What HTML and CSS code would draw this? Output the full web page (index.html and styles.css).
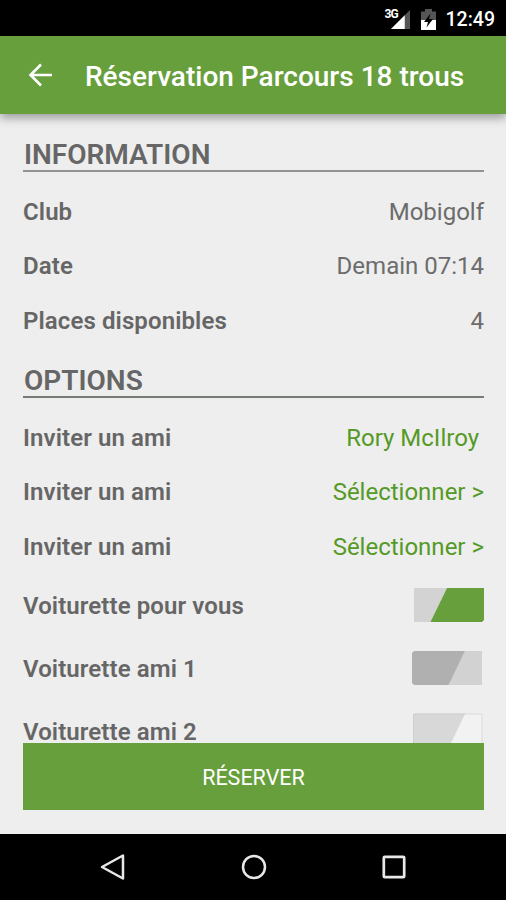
FILE: index.html
```html
<!DOCTYPE html>
<html lang="fr">
<head>
    <meta charset="UTF-8">
    <meta name="viewport" content="width=device-width, initial-scale=1.0">
    <title>Réservation Parcours 18 trous</title>
    <link rel="stylesheet" href="styles.css">
</head>
<body>
    <div class="status-bar">
        <div class="network">
            <span class="network-type">3G</span>
            <svg width="19" height="19" viewBox="0 0 20 20">
                <path d="M0 20L20 0V20Z" fill="#555"/>
                <path d="M0 20L14.500 5.500V20Z" fill="#fff"/>
            </svg>
        </div>
        <svg class="battery" width="15" height="21" viewBox="0 0 15 21">
            <path d="M0 2.500H4V0H11V2.500H15V12H0Z" fill="#555"/>
            <path d="M0 11H15V21H0Z" fill="#fff"/>
            <path d="M9.500 4.500L3 13H7L5.500 18.500L12 10H8Z" fill="#000"/>
        </svg>
        <span class="clock">12:49</span>
    </div>

    <header class="toolbar">
        <svg class="back" width="24" height="24" viewBox="0 0 24 24">
            <path d="M13 1.500L2.500 12L13 22.500M2.500 12H24" fill="none" stroke="#fff" stroke-width="2.600"/>
        </svg>
        <h1>Réservation Parcours 18 trous</h1>
    </header>

    <main class="content">
        <section>
            <h2 class="first">INFORMATION</h2>
            <div class="row"><span class="label">Club</span><span class="value">Mobigolf</span></div>
            <div class="row"><span class="label">Date</span><span class="value">Demain 07:14</span></div>
            <div class="row"><span class="label">Places disponibles</span><span class="value">4</span></div>
        </section>

        <section>
            <h2>OPTIONS</h2>
            <div class="row"><span class="label">Inviter un ami</span><a class="value link name">Rory McIlroy</a></div>
            <div class="row"><span class="label">Inviter un ami</span><a class="value link">Sélectionner &gt;</a></div>
            <div class="row"><span class="label">Inviter un ami</span><a class="value link">Sélectionner &gt;</a></div>
            <div class="row switch-row">
                <span class="label">Voiturette pour vous</span>
                <svg class="switch" width="72" height="38" viewBox="0 0 72 38">
                    <path d="M2 2H35L19 36H2Z" fill="#d3d3d3"/>
                    <path d="M35 2H72V34L70 36H18.500Z" fill="#689f3d"/>
                </svg>
            </div>
            <div class="row switch-row">
                <span class="label">Voiturette ami 1</span>
                <svg class="switch" width="72" height="38" viewBox="0 0 72 38">
                    <path d="M53 2H70V36H36Z" fill="#d2d2d2"/>
                    <path d="M2 2H53L36.500 36H2L0 34V4Z" fill="#b0b0b0"/>
                </svg>
            </div>
            <div class="row switch-row">
                <span class="label">Voiturette ami 2</span>
                <svg class="switch" width="72" height="38" viewBox="0 0 72 38">
                    <path d="M2 2H70V36H2Z" fill="#f2f2f2" stroke="#dadada"/>
                    <path d="M2 2H53L36.500 36H2Z" fill="#d8d8d8"/>
                    <path d="M1.500 36V3L2.500 2H53" fill="none" stroke="#cecece"/>
                </svg>
            </div>
        </section>
    </main>

    <footer class="actions">
        <button class="reserve">RÉSERVER</button>
    </footer>

    <nav class="nav-bar">
        <svg width="28" height="28" viewBox="0 0 28 28">
            <path d="M3 14L24 2.500V25.500Z" fill="none" stroke="#e8e8e8" stroke-width="2.500" stroke-linejoin="round"/>
        </svg>
        <svg width="28" height="28" viewBox="0 0 28 28">
            <circle cx="14" cy="14" r="11" fill="none" stroke="#e8e8e8" stroke-width="2.500"/>
        </svg>
        <svg width="28" height="28" viewBox="0 0 28 28">
            <rect x="3.800" y="3.800" width="20.400" height="20.400" rx="1" fill="none" stroke="#e8e8e8" stroke-width="2.700"/>
        </svg>
    </nav>
</body>
</html>
```

FILE: styles.css
```css
html, body {
    height: 100%;
    margin: 0;
}

body {
    display: flex;
    flex-direction: column;
    overflow: hidden;
    background: #eee;
    color: #666;
    font-family: Roboto, sans-serif;
}

/* Barre d'état */
.status-bar {
    flex: none;
    display: flex;
    justify-content: flex-end;
    align-items: center;
    box-sizing: border-box;
    height: 36px;
    padding: 2px 11px 0 0;
    background: #000;
    color: #fff;
}

.network {
    position: relative;
    display: flex;
    margin-right: 11px;
}

.network-type {
    position: absolute;
    top: -2px;
    left: -6px;
    font-size: 12px;
    line-height: 12px;
    font-weight: 700;
    letter-spacing: -0.8px;
    text-shadow: 0 0 2px #000;
}

.battery {
    margin-right: 10px;
}

.clock {
    font-size: 19.500px;
    font-weight: 500;
}

/* Barre de titre */
.toolbar {
    flex: none;
    position: relative;
    display: flex;
    align-items: center;
    height: 78px;
    padding-left: 28px;
    background: #689f3d;
    color: #fff;
    box-shadow: 0 4px 9px rgba(0, 0, 0, 0.35);
}

.toolbar h1 {
    margin: 3px 0 0 33px;
    font-size: 28px;
    font-weight: 500;
    white-space: nowrap;
}

/* Contenu défilant */
.content {
    flex: 1;
    min-height: 0;
    overflow: hidden;
    padding: 0 22px 0 23px;
}

h2 {
    box-sizing: border-box;
    height: 50px;
    margin: 0 0 13px;
    padding: 16px 0 0 1px;
    border-bottom: 2px solid #777b75;
    font-size: 28px;
    line-height: 34px;
    font-weight: 600;
}

h2.first {
    height: 58px;
    padding-top: 24px;
    border-color: #929292;
}

.row {
    display: flex;
    justify-content: space-between;
    align-items: center;
    height: 54.330px;
    font-size: 24px;
}

.label {
    font-weight: 600;
    letter-spacing: 0.1px;
}

.value {
    color: #6c6c6c;
    font-weight: 400;
}

.link {
    color: #559a26;
}

.name {
    padding-right: 5px;
}

.switch-row {
    height: 63px;
}

.switch-row .label {
    padding-top: 2px;
}

/* Bouton de réservation */
.actions {
    flex: none;
    padding: 0 22px 24px 23px;
}

.reserve {
    display: block;
    width: 100%;
    height: 67px;
    padding: 2px 0 0;
    border: none;
    background: #689f3d;
    color: #fff;
    font-family: inherit;
    font-size: 21.500px;
}

/* Barre de navigation */
.nav-bar {
    flex: none;
    display: flex;
    justify-content: center;
    align-items: center;
    gap: 112.500px;
    height: 66px;
    padding-left: 1px;
    background: #000;
}
```
